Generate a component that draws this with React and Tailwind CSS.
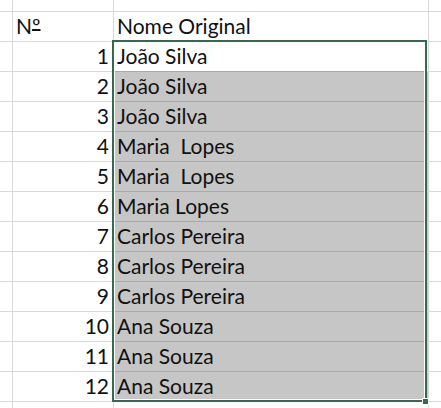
const ROWS = [
  "João Silva",
  "João Silva",
  "João Silva",
  "Maria  Lopes",
  "Maria  Lopes",
  "Maria Lopes",
  "Carlos Pereira",
  "Carlos Pereira",
  "Carlos Pereira",
  "Ana Souza",
  "Ana Souza",
  "Ana Souza",
];

function Row({ num, name, head, selected, first }) {
  return (
    <div className="flex h-[30px] shrink-0 border-b border-[#d9d9d9]">
      <div className="w-[13px] shrink-0 border-r border-[#d9d9d9]" />
      <div
        className={`w-[101px] shrink-0 border-r border-[#d9d9d9] flex items-end pb-[3px] leading-[24px] ${
          head ? "justify-start pl-[3px]" : "justify-end pr-[4px]"
        }`}
      >
        {num}
      </div>
      <div
        className={`w-[315px] shrink-0 flex items-end pb-[3px] pl-[3px] leading-[24px] whitespace-pre border-r border-[#d9d9d9] ${
          selected && !first ? "bg-[#c6c6c6]" : ""
        }`}
      >
        {name}
      </div>
      <div className="flex-1" />
    </div>
  );
}

export default function App() {
  return (
    <div
      className="relative w-[441px] h-[408px] bg-white overflow-hidden text-[21px] text-[#111]"
      style={{ fontFamily: "Lato, 'Open Sans', sans-serif" }}
    >
      <div className="flex flex-col">
        <div className="flex h-[12px] shrink-0 border-b border-[#d9d9d9]">
          <div className="w-[13px] shrink-0 border-r border-[#d9d9d9]" />
          <div className="w-[101px] shrink-0 border-r border-[#d9d9d9]" />
          <div className="w-[315px] shrink-0 border-r border-[#d9d9d9]" />
        </div>
        <Row
          num={
            <span>
              N<span className="underline decoration-[1.5px] [text-underline-offset:-5px]">º</span>
            </span>
          }
          name="Nome Original"
          head
        />
        {ROWS.map((name, i) => (
          <div key={i} className="relative">
            <Row num={i + 1} name={name} selected first={i === 0} />
            {i > 0 && (
              <div className="absolute left-[114px] top-[-1px] w-[312px] h-px bg-[#a9a9a9]" />
            )}
          </div>
        ))}
        <div className="flex h-[20px] shrink-0">
          <div className="w-[13px] shrink-0 border-r border-[#d9d9d9]" />
          <div className="w-[101px] shrink-0 border-r border-[#d9d9d9]" />
          <div className="w-[315px] shrink-0 border-r border-[#d9d9d9]" />
        </div>
      </div>

      {/* selection border */}
      <div className="absolute left-[112px] top-[40px] w-[315px] h-[362px] border-2 border-[#356a50] shadow-[inset_0_0_0_1px_white] pointer-events-none" />
      {/* fill handle */}
      <div className="absolute left-[422px] top-[398px] w-[7px] h-[7px] bg-[#356a50] border border-white" />
    </div>
  );
}
